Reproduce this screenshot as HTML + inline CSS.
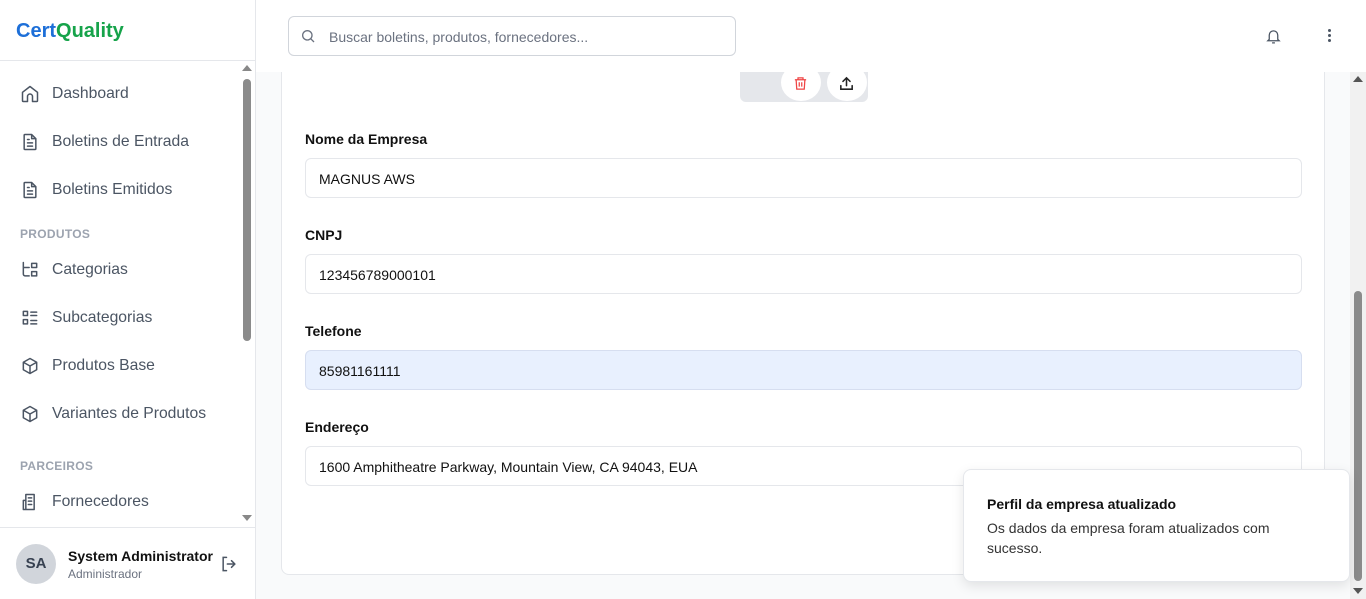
<!DOCTYPE html>
<html><head><meta charset="utf-8"><style>
*{box-sizing:border-box;margin:0;padding:0}
body{width:1366px;height:599px;overflow:hidden;font-family:"Liberation Sans",sans-serif;background:#f9fafb;position:relative;color:#111}
.side{position:absolute;left:0;top:0;width:256px;height:599px;background:#fff;border-right:1px solid #e5e7eb}
.logo{height:61px;border-bottom:1px solid #e5e7eb;padding:20px 16px;font-weight:bold;font-size:20px}
.nav{position:absolute;top:61px;left:0;width:240px;height:466px;overflow:hidden}
.item{position:absolute;left:20px;display:flex;align-items:center;font-size:15.7px;color:#4b5563}
.item svg{width:20px;height:20px;margin-right:12px;stroke:#4b5563;fill:none;stroke-width:1.8;stroke-linecap:round;stroke-linejoin:round}
.sec{position:absolute;left:20px;font-size:12px;font-weight:bold;color:#9ca3af;letter-spacing:.3px}
.sb{position:absolute;left:243px;top:79px;width:8px;height:262px;background:#8b8b8b;border-radius:4px}
.user{position:absolute;top:527px;left:0;width:255px;height:72px;border-top:1px solid #e5e7eb}
.top{position:absolute;left:256px;top:0;width:1110px;height:72px;background:#fff}
.search{position:absolute;left:32px;top:16px;width:448px;height:40px;border:1px solid #d1d5db;border-radius:6px;font-size:14px;color:#6b7280;padding:12px 0 0 40px;background:#fff}
.card{position:absolute;left:281px;top:40px;width:1044px;height:535px;background:#fff;border:1px solid #e5e7eb;border-radius:8px}
.lbl{position:absolute;left:305px;font-size:14px;font-weight:bold;color:#111}
.inp{position:absolute;left:305px;width:997px;height:40px;border:1px solid #e5e7eb;border-radius:6px;font-size:14px;padding:12px 13px;color:#111}
.toast{position:absolute;left:963px;top:469px;width:387px;height:113px;background:#fff;border:1px solid #e5e7eb;border-radius:8px;box-shadow:0 4px 12px rgba(0,0,0,.1);padding:26px 23px}
</style></head><body>
<div class="side">
<div class="logo"><span style="color:#1d6fd8">Cert</span><span style="color:#16a34a">Quality</span></div>
<div class="nav">
<div class="item" style="top:23px"><svg viewBox="0 0 24 24"><path d="M3 10l9-7 9 7v10a1 1 0 0 1-1 1h-5v-6a3 3 0 0 0-6 0v6H4a1 1 0 0 1-1-1z"/></svg>Dashboard</div>
<div class="item" style="top:71px"><svg viewBox="0 0 24 24"><path d="M14 3H6a1 1 0 0 0-1 1v16a1 1 0 0 0 1 1h12a1 1 0 0 0 1-1V8z M14 3v5h5 M9 13h6 M9 17h6 M9 9h2"/></svg>Boletins de Entrada</div>
<div class="item" style="top:119px"><svg viewBox="0 0 24 24"><path d="M14 3H6a1 1 0 0 0-1 1v16a1 1 0 0 0 1 1h12a1 1 0 0 0 1-1V8z M14 3v5h5 M9 13h6 M9 17h6 M9 9h2"/></svg>Boletins Emitidos</div>
<div class="sec" style="top:166px">PRODUTOS</div>
<div class="item" style="top:199px"><svg viewBox="0 0 24 24"><path d="M4 3v14a2 2 0 0 0 2 2h5 M4 9h7 M14 4h6v5h-6z M14 14h6v5h-6z"/></svg>Categorias</div>
<div class="item" style="top:247px"><svg viewBox="0 0 24 24"><path d="M4 4h5v5H4z M4 14h5v5H4z M13 5h7 M13 9h7 M13 15h7 M13 19h7"/></svg>Subcategorias</div>
<div class="item" style="top:295px"><svg viewBox="0 0 24 24"><path d="M12 3l8 4.5v9L12 21l-8-4.5v-9z M4 7.5l8 4.5 8-4.5 M12 12v9"/></svg>Produtos Base</div>
<div class="item" style="top:343px"><svg viewBox="0 0 24 24"><path d="M12 3l8 4.5v9L12 21l-8-4.5v-9z M4 7.5l8 4.5 8-4.5 M12 12v9"/></svg>Variantes de Produtos</div>
<div class="sec" style="top:398px">PARCEIROS</div>
<div class="item" style="top:431px"><svg viewBox="0 0 24 24"><path d="M7 3h10v18H7z M4 10h3v11H4z M10 7h4 M10 11h4 M10 15h4"/></svg>Fornecedores</div>
</div>
<div style="position:absolute;left:242px;top:65px;border:5px solid transparent;border-bottom:6px solid #888;border-top:0"></div>
<div class="sb"></div>
<div style="position:absolute;left:242px;top:515px;border:5px solid transparent;border-top:6px solid #888;border-bottom:0"></div>
<div class="user">
<div style="position:absolute;left:16px;top:16px;width:40px;height:40px;border-radius:50%;background:#d1d5db;color:#374151;font-size:15px;font-weight:bold;text-align:center;line-height:40px">SA</div>
<div style="position:absolute;left:68px;top:20px;font-size:14px;font-weight:bold">System Administrator</div>
<div style="position:absolute;left:68px;top:39px;font-size:12px;color:#6b7280">Administrador</div>
<svg style="position:absolute;left:219px;top:26px" width="20" height="20" viewBox="0 0 24 24" fill="none" stroke="#4b5563" stroke-width="1.8" stroke-linecap="round"><path d="M9 4H5v16h4 M15 8l4 4-4 4 M19 12H10"/></svg>
</div>
</div>
<div class="card"></div>
<div style="position:absolute;left:740px;top:72px;width:128px;height:30px;background:#e5e7eb;border-radius:0 0 6px 6px"></div>
<div style="position:absolute;left:781px;top:64px;width:40px;height:37px;background:#fff;border-radius:50%"></div>
<div style="position:absolute;left:827px;top:64px;width:40px;height:37px;background:#fff;border-radius:50%"></div>
<div class="top">
<div class="search">Buscar boletins, produtos, fornecedores...</div>
<svg style="position:absolute;left:44px;top:28px" width="16" height="16" viewBox="0 0 24 24" fill="none" stroke="#6b7280" stroke-width="2"><circle cx="11" cy="11" r="7"/><path d="M16 16l5 5"/></svg>
<svg style="position:absolute;left:1009px;top:28px" width="17" height="17" viewBox="0 0 24 24" fill="none" stroke="#4b5563" stroke-width="1.8"><path d="M6 16V10a6 6 0 0 1 12 0v6l2 2H4z M10 21h4"/></svg>
<div style="position:absolute;left:1072px;top:29px;width:3px;height:3px;border-radius:50%;background:#4b5563;box-shadow:0 5px #4b5563,0 10px #4b5563"></div>
</div>
<svg style="position:absolute;left:793px;top:76px" width="15" height="15" viewBox="0 0 24 24" fill="none" stroke="#ef4444" stroke-width="2"><path d="M3 6h18 M8 6V3h8v3 M5 6l1 15h12l1-15 M10 10v7 M14 10v7"/></svg>
<svg style="position:absolute;left:838px;top:75px" width="17" height="17" viewBox="0 0 24 24" fill="none" stroke="#222" stroke-width="2.2" stroke-linecap="round"><path d="M12 15V4 M7 9l5-5 5 5 M4 15v5h16v-5"/></svg>
<div class="lbl" style="top:131px">Nome da Empresa</div>
<div class="inp" style="top:158px">MAGNUS AWS</div>
<div class="lbl" style="top:227px">CNPJ</div>
<div class="inp" style="top:254px">123456789000101</div>
<div class="lbl" style="top:323px">Telefone</div>
<div class="inp" style="top:350px;background:#e8f0fe;border-color:#d6def0">85981161111</div>
<div class="lbl" style="top:419px">Endereço</div>
<div class="inp" style="top:446px">1600 Amphitheatre Parkway, Mountain View, CA 94043, EUA</div>
<div style="position:absolute;left:1350px;top:72px;width:16px;height:527px;background:#f1f1f1"></div>
<div style="position:absolute;left:1353px;top:76px;border:5px solid transparent;border-bottom:6px solid #555;border-top:0"></div>
<div style="position:absolute;left:1354px;top:291px;width:8px;height:290px;background:#8b8b8b;border-radius:4px"></div>
<div style="position:absolute;left:1353px;top:588px;border:5px solid transparent;border-top:6px solid #555;border-bottom:0"></div>
<div class="toast">
<div style="font-size:14px;font-weight:bold;color:#111">Perfil da empresa atualizado</div>
<div style="font-size:14px;color:#333;margin-top:6px;line-height:20px">Os dados da empresa foram atualizados com sucesso.</div>
</div>
</body></html>
